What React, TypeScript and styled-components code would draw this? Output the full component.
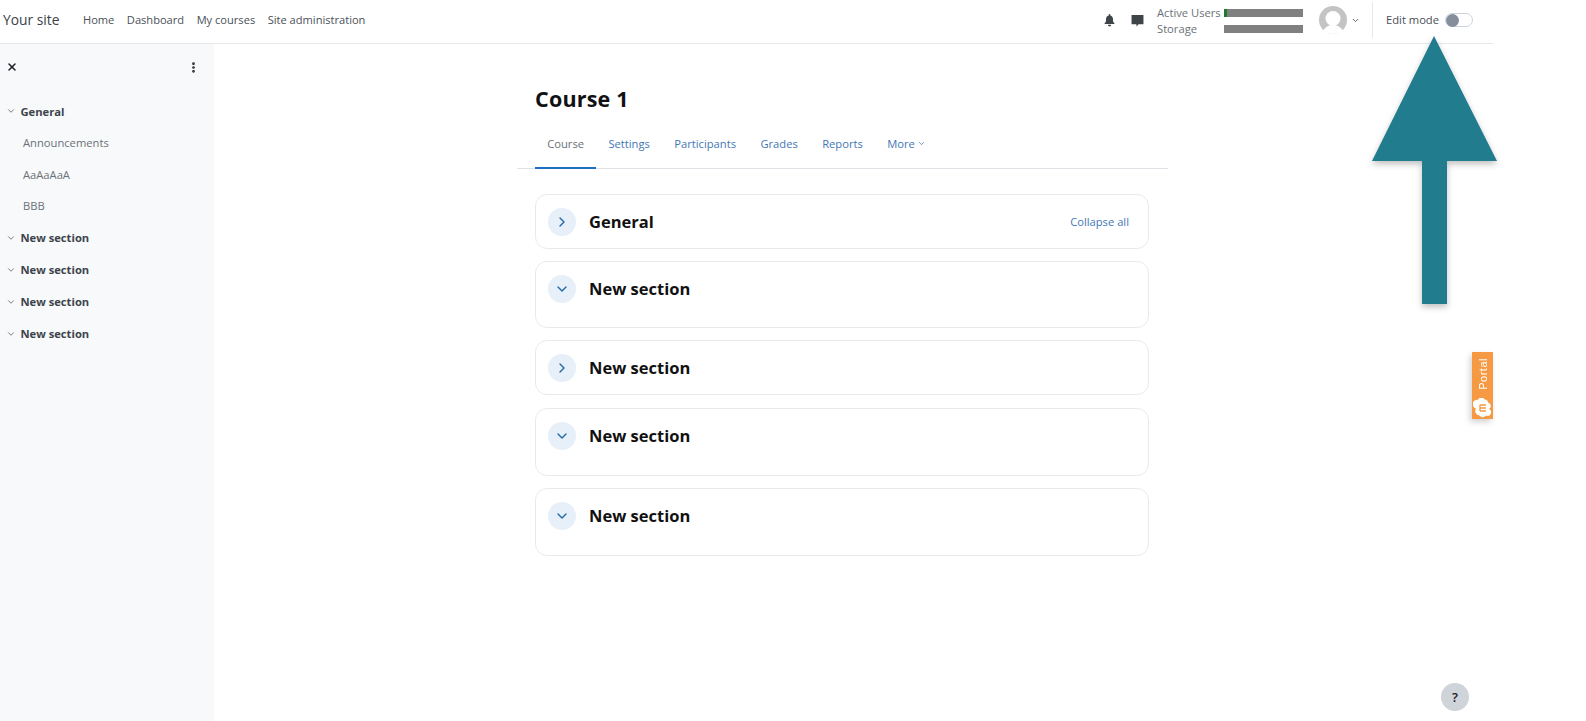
import React from "react";
import styled, { createGlobalStyle } from "styled-components";
import { ChevronDown, ChevronRight, X, MoreVertical } from "lucide-react";

const GlobalStyle = createGlobalStyle`
  html, body {
    margin: 0;
    padding: 0;
    background: #fff;
    font-family: "Open Sans", "Noto Sans", sans-serif;
    color: #495057;
  }
  #root {
    height: 721px;
    overflow: hidden;
  }
`;

const Page = styled.div`
  position: relative;
  width: 1493px;
  height: 721px;
`;

const Navbar = styled.header`
  height: 43px;
  border-bottom: 1px solid #e6e8ea;
  display: flex;
  align-items: center;
  padding-left: 3px;
  padding-right: 20px;
`;

const Brand = styled.span`
  font-size: 13.8px;
  color: #3b4148;
  width: 80px;
  margin-top: -4px;
`;

const PrimaryNav = styled.nav`
  display: flex;
  gap: 12.5px;
  flex: 1;
  margin-top: -4px;
`;

const NavLink = styled.span`
  font-size: 11.1px;
  color: #495057;
`;

const UserArea = styled.div`
  display: flex;
  align-items: center;
  height: 38px;
  margin-top: -3px;
`;

const NavIcon = styled.svg<{ $gap: number }>`
  width: 13px;
  height: 13px;
  margin-right: ${(p) => p.$gap}px;
  fill: #3f4449;
`;

const Quota = styled.div`
  display: grid;
  grid-template-columns: 67px 79px;
  row-gap: 2px;
  align-items: center;
  margin: 2px 0 0 -3px;
`;

const QuotaLabel = styled.span`
  font-size: 11.2px;
  line-height: 14px;
  color: #6a7178;
`;

const QuotaBar = styled.div<{ $used: number }>`
  height: 8px;
  background: #808080;
  border-left: ${(p) => p.$used}px solid #1e7a2c;
`;

const Avatar = styled.svg`
  width: 28px;
  height: 28px;
  margin-left: 16px;
`;

const SmallCaret = styled(ChevronDown)`
  width: 9px;
  height: 9px;
  margin-left: 4px;
  color: #555;
`;

const EditBlock = styled.div`
  display: flex;
  align-items: center;
  height: 36px;
  margin-left: 12px;
  padding-left: 13px;
  border-left: 1px solid #e6e8ea;
`;

const EditLabel = styled.span`
  font-size: 11.2px;
  color: #495057;
  margin: -1px 6px 0 0;
`;

const Toggle = styled.div`
  width: 28px;
  height: 14px;
  box-sizing: border-box;
  border: 1px solid #ced4da;
  border-radius: 8px;
  display: flex;
  align-items: center;
  background: #fff;
`;

const Knob = styled.div`
  width: 13px;
  height: 13px;
  border-radius: 50%;
  background: #868e9c;
`;

const Body = styled.div`
  display: flex;
  height: 677px;
`;

const Sidebar = styled.aside`
  width: 214px;
  flex: none;
  background: #f8f9fa;
  padding-top: 15px;
  box-sizing: border-box;
`;

const SidebarHead = styled.div`
  display: flex;
  justify-content: space-between;
  align-items: center;
  height: 16px;
  padding: 0 14px 0 6px;
  color: #1d2125;
  margin-bottom: 20px;
`;

const SectionRow = styled.div`
  display: flex;
  align-items: center;
  height: 32px;
  padding-left: 5.5px;
  font-size: 11.2px;
  font-weight: 700;
  color: #3d444c;
`;

const SectionCaret = styled(ChevronDown)`
  width: 10px;
  height: 10px;
  margin-right: 5px;
  color: #5c6369;
`;

const ActivityRow = styled.div`
  display: flex;
  align-items: center;
  height: 31.5px;
  padding-left: 23px;
  font-size: 11.2px;
  color: #6a7178;
`;

const Main = styled.main`
  width: 651px;
  margin-left: 303px;
  padding-top: 40px;
`;

const Title = styled.h1`
  margin: 0 0 0 18px;
  font-size: 21.5px;
  line-height: 30px;
  font-weight: 700;
  color: #111;
  letter-spacing: 0.2px;
`;

const Tabs = styled.div`
  display: flex;
  height: 48px;
  margin-top: 7px;
  padding-left: 18px;
  border-bottom: 1px solid #dee2e6;
  box-sizing: border-box;
`;

const Tab = styled.div<{ $active?: boolean }>`
  display: flex;
  align-items: center;
  gap: 2px;
  padding: 0 12.2px 2px;
  font-size: 11.2px;
  color: ${(p) => (p.$active ? "#6a7178" : "#3f78b5")};
  border-bottom: 2px solid ${(p) => (p.$active ? "#1f6fc0" : "transparent")};
  margin-bottom: -1px;
`;

const Cards = styled.div`
  display: flex;
  flex-direction: column;
  margin: 25px 0 0 18px;
  width: 614px;
`;

const Card = styled.section<{ $h: number; $gap: number }>`
  height: ${(p) => p.$h}px;
  margin-bottom: ${(p) => p.$gap}px;
  box-sizing: border-box;
  border: 1px solid #e8eaec;
  border-radius: 12px;
  padding: 13px 19px 0 12px;
  display: flex;
  align-items: flex-start;
`;

const Bubble = styled.div`
  width: 28px;
  height: 28px;
  border-radius: 50%;
  background: #e7eff8;
  color: #1f66ad;
  display: flex;
  align-items: center;
  justify-content: center;
  margin-right: 13px;
  flex: none;
`;

const CardTitle = styled.h3`
  margin: 0;
  flex: 1;
  font-size: 16.5px;
  line-height: 28px;
  font-weight: 700;
  color: #111;
`;

const CollapseAll = styled.span`
  font-size: 11.2px;
  line-height: 28px;
  color: #3f78b5;
`;

const Arrow = styled.svg`
  position: absolute;
  left: 1371px;
  top: 34px;
  width: 128px;
  height: 272px;
  filter: drop-shadow(0 3px 3px rgba(0, 0, 0, 0.25));
`;

const PortalTab = styled.div`
  position: absolute;
  left: 1472px;
  top: 352px;
  width: 21px;
  height: 67px;
  background: #f59a42;
  box-shadow: -2px 3px 6px rgba(0, 0, 0, 0.18);
  display: flex;
  flex-direction: column;
  align-items: center;
  justify-content: space-between;
  padding: 6px 0 1px;
  box-sizing: border-box;
`;

const PortalText = styled.span`
  writing-mode: vertical-rl;
  transform: rotate(180deg);
  font-size: 11px;
  font-family: "Liberation Sans", sans-serif;
  letter-spacing: 0.5px;
  color: #fff;
`;

const HelpButton = styled.div`
  position: absolute;
  left: 1441px;
  top: 683px;
  width: 28px;
  height: 28px;
  border-radius: 50%;
  background: #ced4da;
  color: #1d2125;
  font-size: 13px;
  font-weight: 600;
  display: flex;
  align-items: center;
  justify-content: center;
`;

const sections = [
  { h: 55, gap: 12, open: false, title: "General" },
  { h: 67, gap: 12, open: true, title: "New section" },
  { h: 55, gap: 13, open: false, title: "New section" },
  { h: 68, gap: 12, open: true, title: "New section" },
  { h: 68, gap: 0, open: true, title: "New section" },
];

export default function App() {
  return (
    <Page>
      <GlobalStyle />
      <Navbar>
        <Brand>Your site</Brand>
        <PrimaryNav>
          <NavLink>Home</NavLink>
          <NavLink>Dashboard</NavLink>
          <NavLink>My courses</NavLink>
          <NavLink>Site administration</NavLink>
        </PrimaryNav>
        <UserArea>
          <NavIcon $gap={15} viewBox="0 0 24 24">
            <path d="M12 23a3 3 0 0 0 3-3H9a3 3 0 0 0 3 3zm9-6-2.500-3V9.500c0-3.400-2-6-5-6.800V1.500a1.500 1.500 0 0 0-3 0v1.200c-3 .8-5 3.400-5 6.800V14L3 17v1.500h18z" />
          </NavIcon>
          <NavIcon $gap={16} viewBox="0 0 24 24">
            <path d="M1 2h22v17h-9l-4 4v-4H1z" />
          </NavIcon>
          <Quota>
            <QuotaLabel>Active Users</QuotaLabel>
            <QuotaBar $used={3} />
            <QuotaLabel>Storage</QuotaLabel>
            <QuotaBar $used={0} />
          </Quota>
          <Avatar viewBox="0 0 28 28">
            <circle cx="14" cy="14" r="14" fill="#c4c4c4" />
            <path d="M4 25c2-4 6-6 10-6s8 2 10 6c-2.500 2-6 3-10 3s-7.500-1-10-3z" fill="#fff" />
            <circle cx="14" cy="12.500" r="7.500" fill="#fff" />
          </Avatar>
          <SmallCaret strokeWidth={2.5} />
          <EditBlock>
            <EditLabel>Edit mode</EditLabel>
            <Toggle>
              <Knob />
            </Toggle>
          </EditBlock>
        </UserArea>
      </Navbar>
      <Body>
        <Sidebar>
          <SidebarHead>
            <X size={12} strokeWidth={3} />
            <MoreVertical size={13} strokeWidth={3} />
          </SidebarHead>
          <SectionRow>
            <SectionCaret />
            General
          </SectionRow>
          <ActivityRow>Announcements</ActivityRow>
          <ActivityRow>AaAaAaA</ActivityRow>
          <ActivityRow>BBB</ActivityRow>
          <SectionRow>
            <SectionCaret />
            New section
          </SectionRow>
          <SectionRow>
            <SectionCaret />
            New section
          </SectionRow>
          <SectionRow>
            <SectionCaret />
            New section
          </SectionRow>
          <SectionRow>
            <SectionCaret />
            New section
          </SectionRow>
        </Sidebar>
        <Main>
          <Title>Course 1</Title>
          <Tabs>
            <Tab $active>Course</Tab>
            <Tab>Settings</Tab>
            <Tab>Participants</Tab>
            <Tab>Grades</Tab>
            <Tab>Reports</Tab>
            <Tab>
              More <ChevronDown size={9} />
            </Tab>
          </Tabs>
          <Cards>
            {sections.map((s, i) => (
              <Card key={i} $h={s.h} $gap={s.gap}>
                <Bubble>
                  {s.open ? <ChevronDown size={16} /> : <ChevronRight size={16} />}
                </Bubble>
                <CardTitle>{s.title}</CardTitle>
                {i === 0 && <CollapseAll>Collapse all</CollapseAll>}
              </Card>
            ))}
          </Cards>
        </Main>
      </Body>
      <Arrow viewBox="0 0 128 272">
        <path d="M63 2 L126 127 L76 127 L76 270 L51 270 L51 127 L1 127 Z" fill="#217c8d" />
      </Arrow>
      <PortalTab>
        <PortalText>Portal</PortalText>
        <svg width="19" height="20" viewBox="0 0 19 20">
          <path d="M5 2a3.500 3.500 0 0 1 6.500-.5 3 3 0 0 1 3.500 3 3.500 3.500 0 0 1 1 6.500 3.500 3.500 0 0 1-3 6.500 4 4 0 0 1-6.500 0A4.500 4.500 0 0 1 3 10.500 4 4 0 0 1 5 2z" fill="#fff" />
          <path d="M7 7h6M7 10h6M7 13h6M7 7v6" stroke="#f59a42" strokeWidth="1.300" fill="none" />
        </svg>
      </PortalTab>
      <HelpButton>?</HelpButton>
    </Page>
  );
}
